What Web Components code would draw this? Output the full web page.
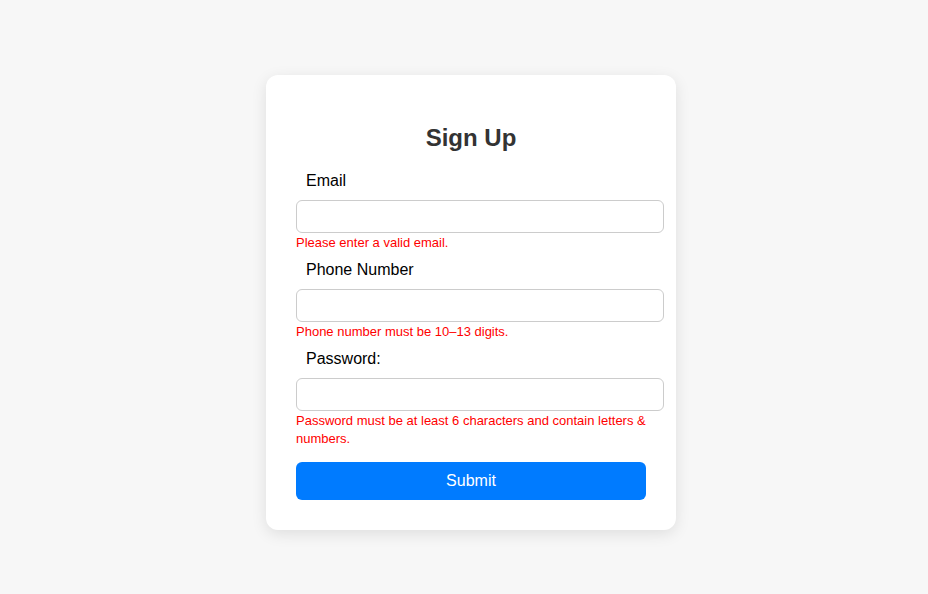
<!DOCTYPE html>
<html lang="en">
<head>
<meta charset="utf-8">
<meta name="viewport" content="width=device-width, initial-scale=1">
<title>Sign Up</title>
<style>
html { height: 100%; }
body {
  margin: 0;
  min-height: 100%;
  display: grid;
  background: #f7f7f7;
  color: #000;
  font: 16px/18px "Liberation Sans", Arial, sans-serif;
}
</style>
</head>
<body>
<sign-up-page>
  <sign-up-card heading="Sign Up">
    <form-field label="Email" type="email" error="Please enter a valid email."></form-field>
    <form-field label="Phone Number" type="tel" error="Phone number must be 10–13 digits."></form-field>
    <form-field label="Password:" type="password" error="Password must be at least 6 characters and contain letters &amp; numbers."></form-field>
    <submit-button slot="action">Submit</submit-button>
  </sign-up-card>
</sign-up-page>
<script>
class SignUpPage extends HTMLElement {
  constructor() {
    super();
    this.attachShadow({ mode: "open" }).innerHTML = `
      <style>
        :host { display: flex; align-items: center; justify-content: center; box-sizing: border-box; padding: 24px 0 13px 14px; }
      </style>
      <slot></slot>`;
  }
}

class SignUpCard extends HTMLElement {
  constructor() {
    super();
    this.attachShadow({ mode: "open" }).innerHTML = `
      <style>
        :host {
          display: block;
          box-sizing: border-box;
          width: 100%;
          max-width: 410px;
          padding: 50px 30px 30px;
          border-radius: 12px;
          background: #fff;
          box-shadow: 0 4px 15px rgba(0, 0, 0, 0.1);
        }
        h2 { margin: 0 0 22px; color: #333; font-size: 24px; line-height: 25px; text-align: center; }
        form { display: flex; flex-direction: column; gap: 9px; }
        .action { margin-top: 5px; }
      </style>
      <h2></h2>
      <form novalidate>
        <slot></slot>
        <div class="action"><slot name="action"></slot></div>
      </form>`;
    this.shadowRoot.querySelector("form").addEventListener("submit", (event) => event.preventDefault());
  }
  connectedCallback() {
    this.shadowRoot.querySelector("h2").textContent = this.getAttribute("heading");
  }
}

class FormField extends HTMLElement {
  constructor() {
    super();
    this.attachShadow({ mode: "open" }).innerHTML = `
      <style>
        :host { display: block; }
        label { display: block; padding: 0 10px; margin-bottom: 10px; }
        input {
          display: block;
          box-sizing: border-box;
          width: calc(100% + 18px);
          height: 33px;
          padding: 8px;
          border: 1px solid #ccc;
          border-radius: 6px;
          background: #fff;
          font: 13px "Liberation Sans", Arial, sans-serif;
        }
        p { margin: 1px 0 0; color: red; font-size: 13px; line-height: 18px; }
      </style>
      <label for="control"></label>
      <input id="control" aria-describedby="error" aria-invalid="true">
      <p id="error"></p>`;
  }
  connectedCallback() {
    const root = this.shadowRoot;
    root.querySelector("label").textContent = this.getAttribute("label");
    root.querySelector("input").type = this.getAttribute("type");
    root.querySelector("p").textContent = this.getAttribute("error");
  }
}

class SubmitButton extends HTMLElement {
  constructor() {
    super();
    this.attachShadow({ mode: "open" }).innerHTML = `
      <style>
        :host { display: block; }
        button {
          display: block;
          width: 100%;
          padding: 10px;
          border: 0;
          border-radius: 6px;
          background: #007bff;
          color: #fff;
          font: inherit;
          cursor: pointer;
        }
      </style>
      <button type="submit"><slot></slot></button>`;
  }
}

customElements.define("sign-up-page", SignUpPage);
customElements.define("sign-up-card", SignUpCard);
customElements.define("form-field", FormField);
customElements.define("submit-button", SubmitButton);
</script>
</body>
</html>
